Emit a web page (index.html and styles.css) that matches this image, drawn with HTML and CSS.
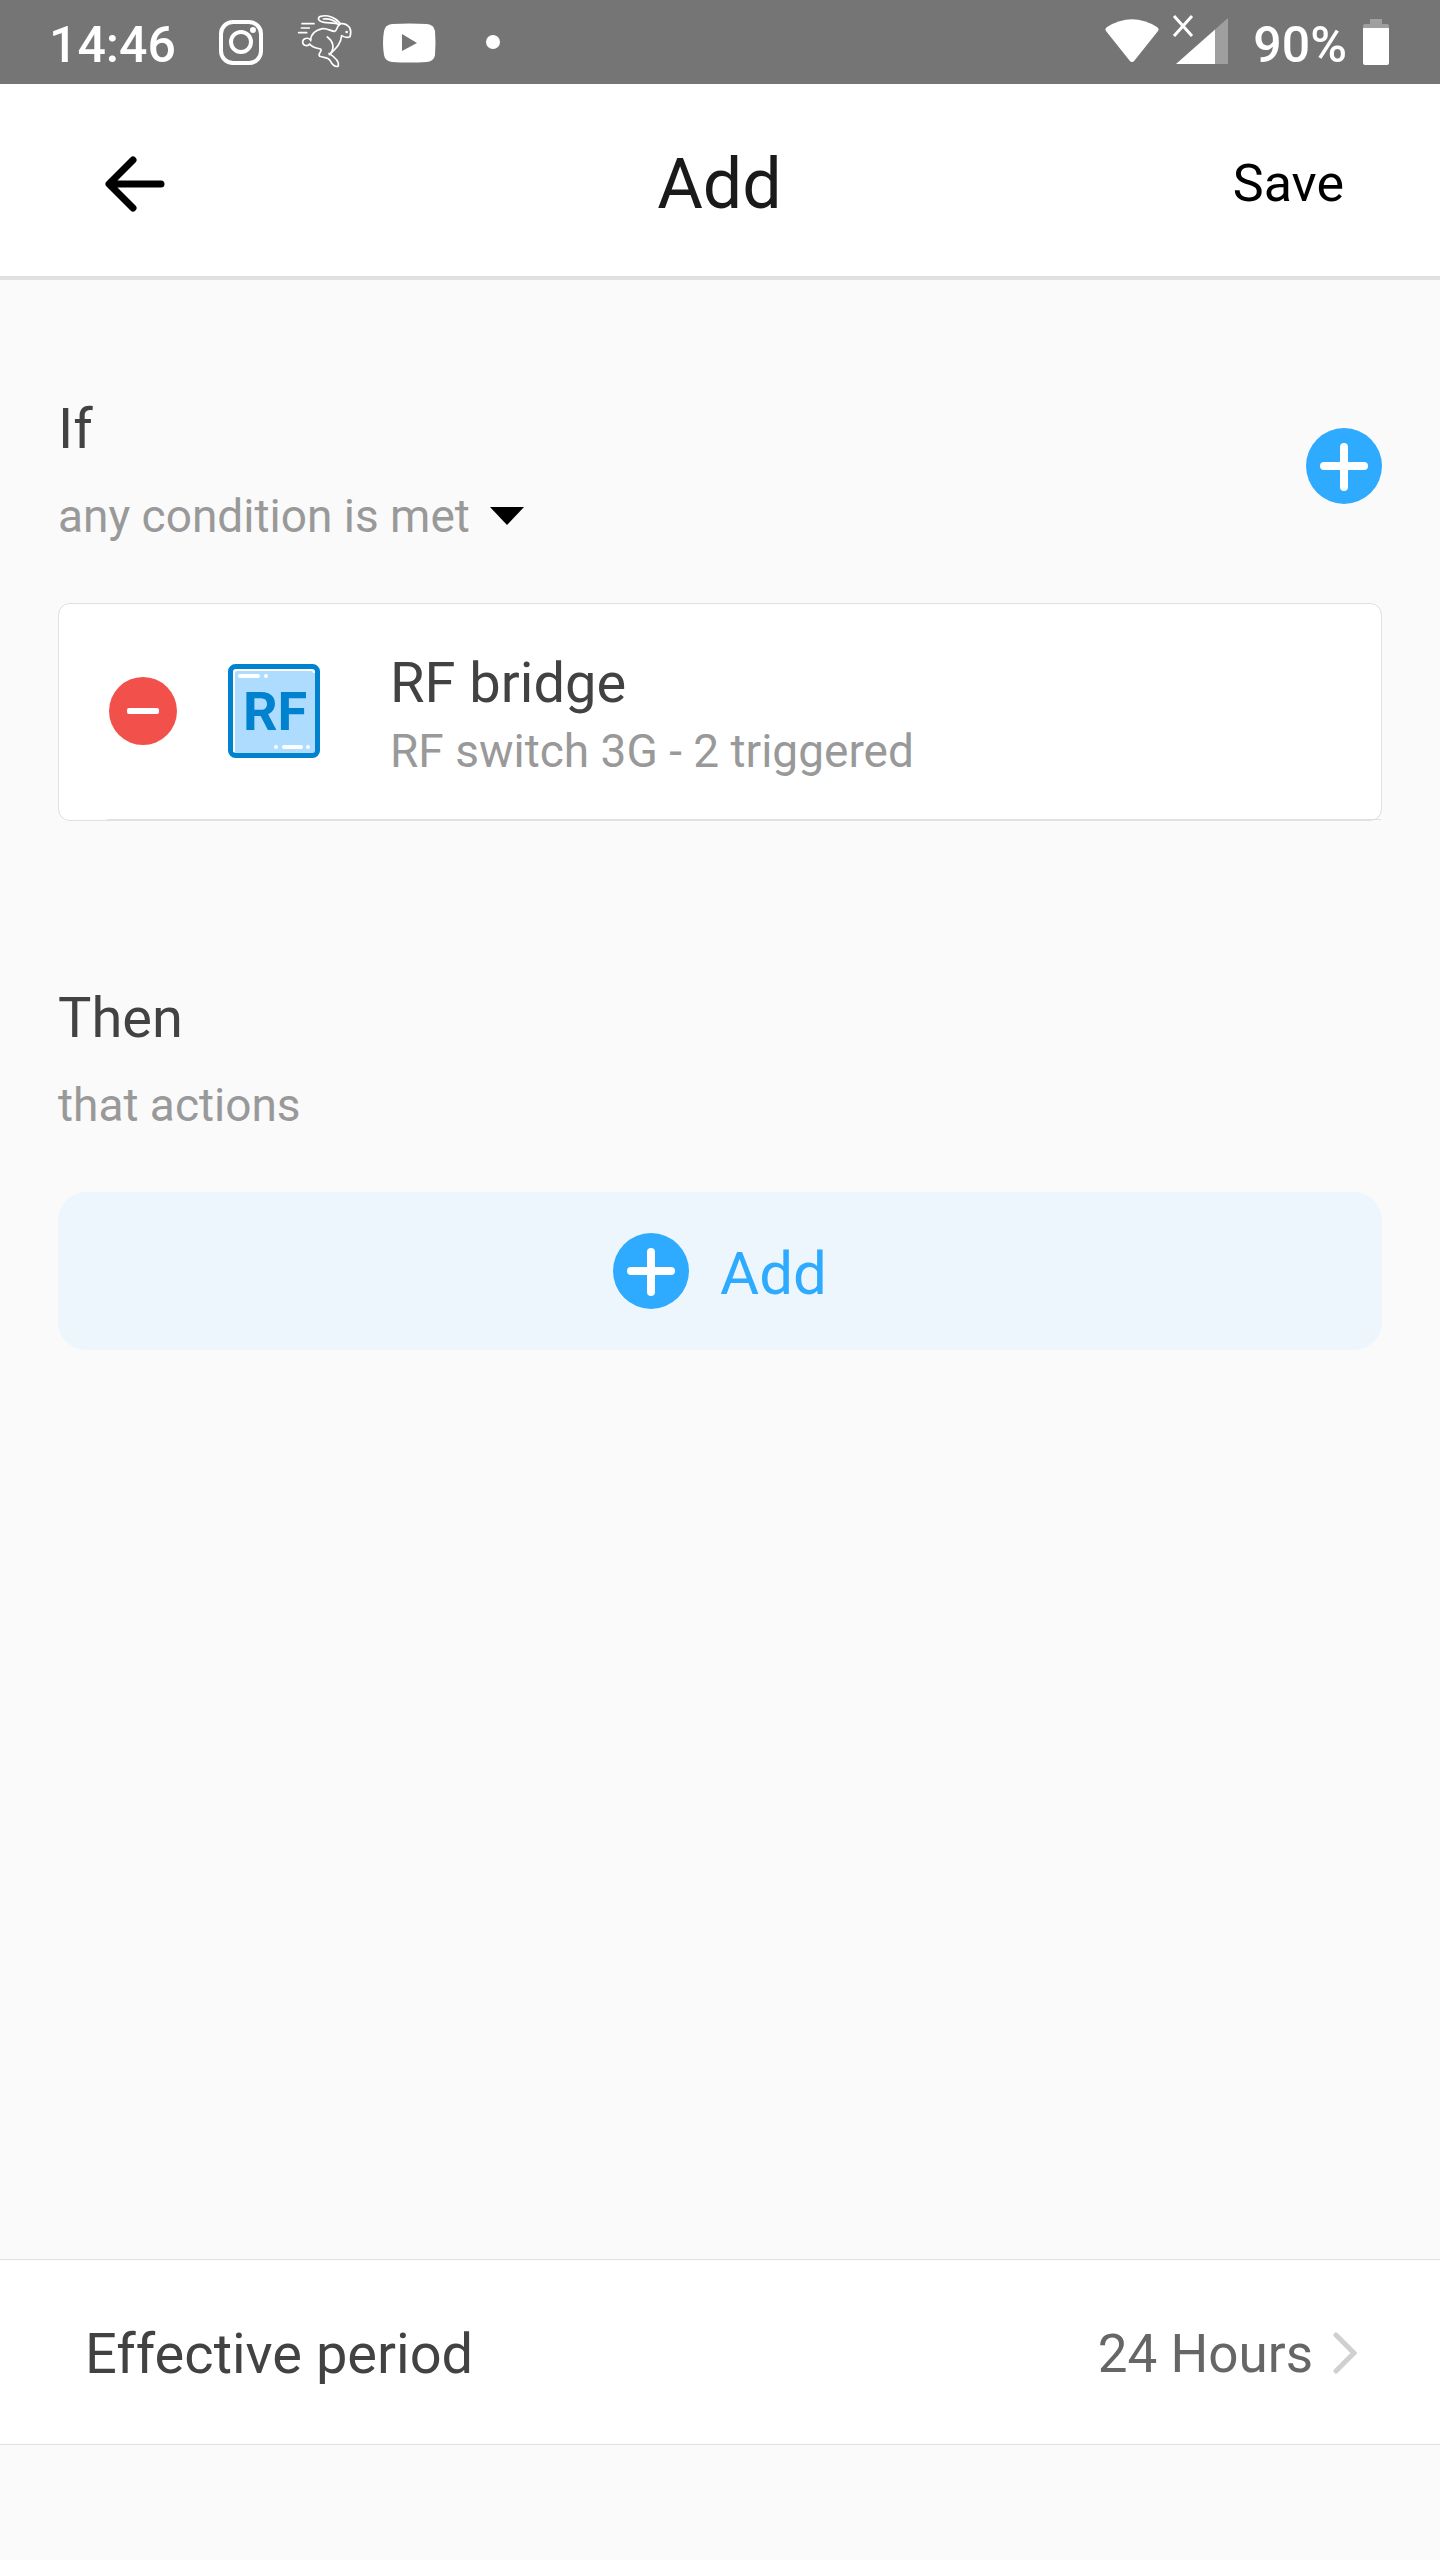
FILE: index.html
```
<!DOCTYPE html>
<html lang="en">
<head>
    <meta charset="UTF-8">
    <meta name="viewport" content="width=device-width, initial-scale=1.0">
    <title>Add</title>
    <link rel="stylesheet" href="styles.css">
</head>
<body>
    <div class="status-bar">
        <span class="status-text">14:46</span>
        <div class="notifications">
            <svg width="84" height="84" viewBox="0 0 84 84" fill="none" stroke="#fff" stroke-width="4">
                <rect x="22" y="22" width="40" height="41" rx="12"/>
                <circle cx="42" cy="42" r="10"/>
                <circle cx="54" cy="30" r="3" fill="#fff" stroke="none"/>
            </svg>
            <!-- rabbit -->
            <svg width="84" height="84" viewBox="9 0 252 252" fill="none" stroke="#fff" stroke-width="5" stroke-linecap="round" stroke-linejoin="round">
                <path d="M66 71h36M64 84h24M56 98h24"/>
                <path d="M178 74C164 66 148 70 132 67C112 64 112 52 122 49C142 43 168 53 181 71C192 70 203 75 209 83C213 92 213 102 210 110C201 114 193 112 185 107C183 132 168 145 148 164"/>
                <path d="M130 57C146 55 160 60 170 68"/>
                <path d="M180 73C168 80 172 92 164 94C152 94 145 85 128 86C105 90 92 104 92 122"/>
                <path d="M91 119C84 112 68 114 68 126C68 138 84 140 89 132C98 144 110 143 123 148C125 158 112 160 119 169C132 174 143 170 150 181C157 195 166 203 175 198C178 187 169 174 147 160"/>
                <path d="M142 111C158 122 165 142 152 160"/>
                <circle cx="200" cy="96" r="4" fill="#fff" stroke="none"/>
            </svg>
            <svg width="84" height="84" viewBox="0 0 84 84">
                <path fill="#fff" d="M25 24Q42 23 60 24Q67 25 68 31Q69 43 68 55Q67 61 60 62Q42 63 25 62Q18 61 17 55Q15 43 17 31Q18 25 25 24Z"/>
                <path fill="#757575" d="M35 34v17l15-8z"/>
            </svg>
            <svg width="84" height="84" viewBox="0 0 84 84">
                <circle cx="42" cy="42" r="7" fill="#fff"/>
            </svg>
        </div>
        <div class="system-icons">
            <svg width="54" height="84" viewBox="0 0 54 84">
                <path fill="#fff" d="M1 31Q-.5 29 2 27Q27 11.500 52 27Q54.500 29 53 31L29.500 60.500Q27 63.500 24.500 60.500Z"/>
            </svg>
            <svg width="56" height="84" viewBox="0 0 56 84">
                <path fill="#9f9f9f" d="M56 18v46H43V29.500z"/>
                <path fill="#fff" d="M43 29.500V64H4z"/>
                <path stroke="#fff" stroke-width="3" d="M2 16l18 20M20 16L2 36"/>
            </svg>
            <span class="status-text">90%</span>
            <svg width="26" height="84" viewBox="0 0 26 84">
                <path fill="#9f9f9f" d="M7 19h12v5h5q2 0 2 2v4H0v-4q0-2 2-2h5z"/>
                <path fill="#fff" d="M0 28h26v35q0 2-2 2H2q-2 0-2-2z"/>
            </svg>
        </div>
    </div>

    <header class="header">
        <button class="back-btn" aria-label="Back">
            <svg width="72" height="60" viewBox="-8 0 72 60" fill="none" stroke="#000" stroke-width="7" stroke-linecap="round" stroke-linejoin="round">
                <path d="M30 6L6 30L30 54M7 30H58"/>
            </svg>
        </button>
        <h1>Add</h1>
        <button class="save-btn">Save</button>
    </header>

    <main class="content">
        <section>
            <div class="section-head">
                <div>
                    <h2>If</h2>
                    <div class="condition">
                        <select class="condition-select" aria-label="Condition type">
                            <option>any condition is met</option>
                            <option>all conditions are met</option>
                        </select>
                        <svg width="34" height="18" viewBox="0 0 34 18">
                            <path d="M0 0h34L17 18z"/>
                        </svg>
                    </div>
                </div>
                <button class="icon-btn" aria-label="Add condition">
                    <svg width="76" height="76" viewBox="0 0 76 76">
                        <circle cx="38" cy="38" r="38" fill="#2eaaff"/>
                        <path stroke="#fff" stroke-width="8" stroke-linecap="round" d="M38 19v40M18 38h40"/>
                    </svg>
                </button>
            </div>
            <div class="card">
                <button class="icon-btn" aria-label="Remove condition">
                    <svg width="68" height="68" viewBox="0 0 68 68">
                        <circle cx="34" cy="34" r="34" fill="#f2514b"/>
                        <rect x="18" y="31" width="32" height="6" rx="2" fill="#fff"/>
                    </svg>
                </button>
                <svg class="device-icon" width="92" height="94" viewBox="0 0 92 94">
                    <rect x="2.500" y="2.500" width="87" height="89" rx="5" fill="#aedcfe" stroke="#0082cf" stroke-width="5"/>
                    <path fill="none" stroke="#fff" stroke-width="2" d="M6 88V9q0-3 3-3h74q3 0 3 3"/>
                    <path stroke="#fff" stroke-width="4" stroke-linecap="round" d="M12 12h18M38 12h0M48 83h0M56 83h17M80 83h0"/>
                    <text x="47" y="66" text-anchor="middle" class="rf-text">RF</text>
                </svg>
                <div class="card-text">
                    <h3>RF bridge</h3>
                    <p>RF switch 3G - 2 triggered</p>
                </div>
            </div>
        </section>

        <section>
            <h2>Then</h2>
            <p class="hint">that actions</p>
            <button class="add-btn">
                <svg width="76" height="76" viewBox="0 0 76 76">
                    <circle cx="38" cy="38" r="38" fill="#2eaaff"/>
                    <path stroke="#fff" stroke-width="8" stroke-linecap="round" d="M38 19v40M18 38h40"/>
                </svg>
                <span>Add</span>
            </button>
        </section>
    </main>

    <button class="period-row">
        <span>Effective period</span>
        <span class="period-value">
            24 Hours
            <svg width="24" height="44" viewBox="0 0 24 44" fill="none" stroke="#d0d0d0" stroke-width="5" stroke-linecap="round">
                <path d="M3 3L21 21L3 39"/>
            </svg>
        </span>
    </button>
</body>
</html>
```
FILE: styles.css
```
* {
    box-sizing: border-box;
}

body {
    margin: 0;
    min-height: 100vh;
    display: flex;
    flex-direction: column;
    font-family: Roboto, sans-serif;
    background: #fafafa;
    color: #424242;
}

h1, h2, h3, p {
    margin: 0;
    font-weight: 400;
}

svg {
    display: block;
    flex-shrink: 0;
}

button, select {
    padding: 0;
    border: none;
    background: none;
    font-family: inherit;
    color: inherit;
    cursor: pointer;
}

.status-bar {
    display: flex;
    align-items: center;
    height: 84px;
    padding: 0 51px 0 49px;
    background: #757575;
    color: #ffffff;
}

.status-text {
    padding-top: 6px;
    font-size: 50px;
    font-weight: 500;
    line-height: 60px;
}

.notifications {
    display: flex;
    margin-left: 23px;
}

.system-icons {
    display: flex;
    align-items: center;
    margin-left: auto;
}

.system-icons svg + svg {
    margin-left: 13px;
}

.system-icons .status-text {
    margin: 0 16px 0 25px;
}

.header {
    display: grid;
    grid-template-columns: 1fr auto 1fr;
    align-items: center;
    height: 196px;
    padding: 8px 96px 0 95px;
    background: #ffffff;
    border-bottom: 4px solid #e0e0e0;
}

.header h1 {
    font-size: 70px;
    line-height: 84px;
    color: #1a1a1a;
}

.back-btn {
    justify-self: start;
}

.save-btn {
    justify-self: end;
    font-size: 52px;
    line-height: 62px;
    color: #000000;
}

.content {
    flex: 1;
    padding: 112px 58px 0;
}

.content section {
    margin-bottom: 160px;
}

.section-head {
    display: flex;
    align-items: center;
    justify-content: space-between;
}

.section-head .icon-btn,
.card .icon-btn,
.device-icon {
    padding-bottom: 3px;
    box-sizing: content-box;
}

.content h2,
.content h3 {
    font-size: 56px;
    line-height: 74px;
}

.condition {
    display: flex;
    align-items: center;
    gap: 20px;
    margin-top: 23px;
}

.condition-select {
    appearance: none;
    field-sizing: content;
    font-size: 46px;
    line-height: 54px;
    color: #999999;
}

.hint {
    margin-top: 23px;
    font-size: 46px;
    line-height: 54px;
    color: #999999;
}

.card {
    position: relative;
    display: flex;
    align-items: center;
    height: 218px;
    margin-top: 60px;
    padding: 0 50px;
    background: #ffffff;
    border: 1px solid #e0e0e0;
    border-radius: 12px;
}

/* row divider, starts under the remove button */
.card::after {
    content: "";
    position: absolute;
    left: 48px;
    right: 0;
    bottom: 0;
    height: 1px;
    background: #e0e0e0;
}

.device-icon {
    margin: 0 70px 0 51px;
}

.rf-text {
    font-size: 54px;
    font-weight: 700;
    fill: #0082cf;
}

.card-text p {
    margin-top: 4px;
    font-size: 46px;
    line-height: 54px;
    color: #999999;
}

.add-btn {
    display: flex;
    align-items: center;
    justify-content: center;
    gap: 31px;
    width: 100%;
    height: 158px;
    margin-top: 60px;
    border-radius: 28px;
    background: #edf6fd;
    font-size: 60px;
    color: #2eaaff;
}

.add-btn span {
    padding-top: 4px;
}

.period-row {
    display: flex;
    align-items: center;
    justify-content: space-between;
    width: 100%;
    height: 186px;
    margin-bottom: 115px;
    padding: 4px 83px 0 85px;
    background: #ffffff;
    border-top: 1px solid #e0e0e0;
    border-bottom: 1px solid #e0e0e0;
    font-size: 56px;
}

.period-value {
    display: flex;
    align-items: center;
    gap: 20px;
    font-size: 53px;
    color: #666666;
}
```
